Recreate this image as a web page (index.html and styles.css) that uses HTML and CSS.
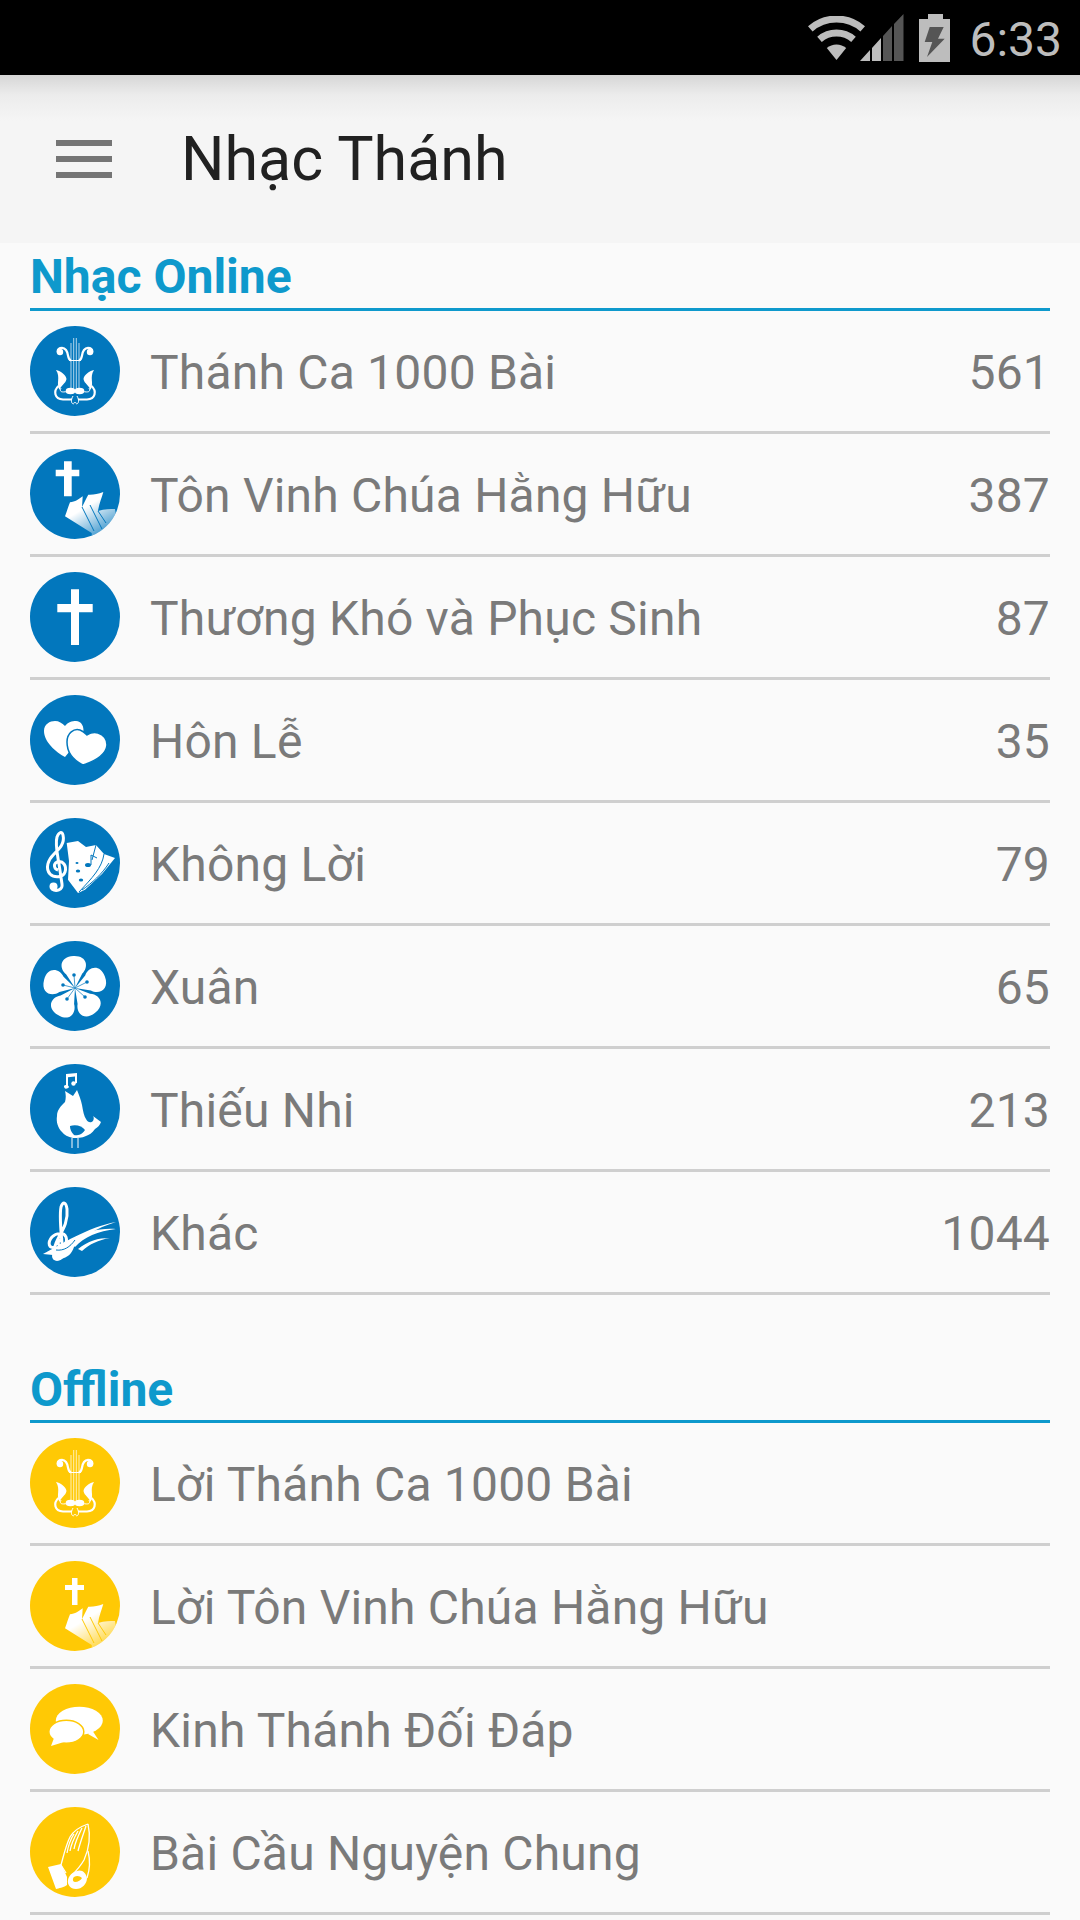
FILE: index.html
```html
<!DOCTYPE html>
<html lang="vi">
<head>
<meta charset="utf-8">
<title>Nhạc Thánh</title>
<link rel="stylesheet" href="styles.css">
</head>
<body>
<svg class="defs" width="0" height="0" aria-hidden="true">
  <defs>
    <linearGradient id="fade" x1="0.15" y1="0.1" x2="0.75" y2="0.95">
      <stop offset="0.3" stop-color="#fff"/>
      <stop offset="1" stop-color="#fff" stop-opacity="0.15"/>
    </linearGradient>
    <clipPath id="disc"><circle cx="45" cy="45" r="45"/></clipPath>
    <g id="lyre-half">
      <path class="ln" d="M28,27C26,22 33,20 36,24C39,28 37,33 41,34.500"/>
      <circle class="w" cx="30" cy="26" r="3.200"/>
      <path class="w" d="M26,44C31,45 36,49 36.500,53C35.500,58 31,59 29.500,64C25.500,57 31,52 26,44Z"/>
      <path class="ln" d="M28.500,60C23,65 24.500,73 33,73.500L42,73.500"/>
      <path class="ln thin" d="M31,62C29,66 32,66.500 37,65.500"/>
      <ellipse class="w" cx="40.500" cy="65" rx="4.800" ry="3.200"/>
      <path class="ln thin" d="M43,70C39,77 44,80 44.500,76"/>
    </g>
    <g id="lyre">
      <use href="#lyre-half"/>
      <use href="#lyre-half" transform="translate(90) scale(-1,1)"/>
      <path class="ln hair" d="M41,17V65M43.700,12V65M46.300,12V65M49,17V65"/>
      <path class="ln thin" d="M39,34.500H51"/>
    </g>
    <g id="horns" clip-path="url(#disc)">
      <path fill="url(#fade)" d="M35,67.300C37,62 38,58 40,53.300C45,53 49,50 52.700,47.300L52,58C55,52 57,48 58.300,45.700C63,46 68,45 73.300,43C72,48 69,55 68,62C75,60 80,60 85,60L90,90H62L61.700,84Z"/>
      <path class="gap" d="M52,58L64,82M60,56L72,80M68,62L76,74"/>
    </g>
    <g id="crossbig">
      <path class="w" d="M41,17.300H49V32H62.700V40.300H49V73H41V40.300H27.300V32H41Z"/>
    </g>
    <g id="hearts">
      <path class="w" d="M35,62C26,57 14,47 14,36C14,29 20,26 25,26C29,26 32,28 35,31C38,27 42,26 46,26C51,26 55,31 53,40Z"/>
      <path class="w gapw" d="M53,70C45,66 37,60 37,47C37,38 44,33 50,35C53,36 55,38 57,40C60,38 64,37 68,38C74,40 77,45 77,50C76,60 65,66 53,70Z"/>
    </g>
    <g id="clefsheets">
      <path class="w" d="M36.700,25L48,23L56,29L66,27L74,36L85,40L72,56L55,71.700L48,75L38,61.700L39,43Z"/>
      <path class="gap" d="M66,27L62,42M74,36C72,50 62,60 49,74M79,45C72,56 62,65 52,72"/>
      <path class="ln clefln" d="M28,52C24,51 23,46 27,44C33,42 37,48 35,54C33,60 24,60 20,56C15,50 18,42 24,36C29,31 35,26 33,17C32,13 29,14 27,19C25,26 27,34 29,46L32,66C33,72 26,74 22,71"/>
      <circle class="w" cx="23.500" cy="68.500" r="4"/>
      <ellipse class="dot" cx="48" cy="53" rx="2.200" ry="1.500"/>
      <ellipse class="dot" cx="51" cy="62" rx="2.200" ry="1.500"/>
      <ellipse class="dot" cx="47" cy="45" rx="1.500" ry="1.100"/>
      <ellipse class="dot" cx="58" cy="47" rx="3" ry="2"/>
      <path class="gap" d="M61,47V37L67,40"/>
    </g>
    <path id="petal" d="M45,47L37,33C30,27 31,15 45,15C59,15 60,27 53,33Z"/>
    <g id="flower">
      <use class="w" href="#petal" transform="rotate(-3 45 47)"/>
      <use class="w" href="#petal" transform="rotate(69 45 47)"/>
      <use class="w" href="#petal" transform="rotate(141 45 47)"/>
      <use class="w" href="#petal" transform="rotate(213 45 47)"/>
      <use class="w" href="#petal" transform="rotate(285 45 47)"/>
      <path class="gap hair" d="M45,47L44,34M45,47L57,41M45,47L55,56M45,47L37,58M45,47L33,44"/>
      <circle class="dot" cx="44" cy="34" r="1.800"/>
      <circle class="dot" cx="57" cy="41" r="1.800"/>
      <circle class="dot" cx="55" cy="56" r="1.800"/>
      <circle class="dot" cx="37" cy="58" r="1.800"/>
      <circle class="dot" cx="33" cy="44" r="1.800"/>
    </g>
    <g id="bird">
      <path class="w" d="M36,21V10L47,9V19L45,19.500V12.500L38,13.300V21.500A2.300,1.800 0 1 1 36,21Z"/>
      <circle class="w" cx="43.500" cy="19.500" r="2.200"/>
      <path class="w" d="M35,27L43,32L47,26C49,31 51,36 52,41C53,47 54,52 56,55C58,59 61,59 63,57C64,55 64,53 63,52L71,58C70,61 68,63 65,65C62,69 59,71 56,72C52,74 47,74 43,74C38,73 34,71 32,68C28,64 26,58 27,52C27,46 31,42 35,38C36,34 36,31 35,27Z"/>
      <path class="dot" d="M40,62C46,60 52,62 55,66C52,71 46,72 44,71C41,68 40,65 40,62Z"/>
      <path class="ln thin" d="M42,74V84M48,74V84"/>
    </g>
    <g id="clefswoosh">
      <path class="ln clefln" d="M33,53C29,52 27,56 29,58C33,61 38,56 36,50C34,45 26,46 22,50C17,56 19,62 25,60C26,50 39,40 37,22C36,15 33,14 31,20C29,30 31,45 33,66C33,71 29,73 26,71"/>
      <path class="w" d="M13,67C30,58 58,40 86,35C66,41 52,50 44,60C42,66 38,71 30,72C26,72 24,70 23,68Z"/>
      <path class="w" d="M40,54C56,44 70,41 86,42C68,44 54,50 45,60Z"/>
      <path class="w" d="M48,62C58,54 68,51 80,51C68,53 60,57 52,64Z"/>
      <circle class="w" cx="27" cy="69" r="5"/>
      <path class="gap" d="M26,63C34,64 40,60 45,53"/>
    </g>
    <g id="chat">
      <ellipse class="w" cx="49.300" cy="36.700" rx="23.500" ry="14"/>
      <path class="w" d="M62,46L68.500,56L58,50Z"/>
      <ellipse class="w gapw" cx="36.300" cy="47.700" rx="17.500" ry="11.500"/>
      <path class="w" d="M24,54L21,62L34,58Z"/>
    </g>
    <g id="hands">
      <path class="ln thin2" d="M58,17C52,19 44,23 40,30C36,38 34,47 31,58L36,66M58,17C61,30 58,44 54,53C50,60 46,64 42,68"/>
      <path class="ln thin2" d="M44,27C40,33 38,40 37,46M48,24C44,31 41,38 40,44M52,21C48,29 45,36 44,42M56,19C53,28 50,36 48,44"/>
      <path class="w" d="M18,60L31,57L37,70L37,78C33,81 29,81 26,82Z"/>
      <path class="w" d="M47,64C52,62 56,66 57,71C57,77 52,82 46,82C40,82 37,77 38,73C39,68 43,65 47,64ZM44,70C42,72 43,75 45,75C48,75 51,73 52,71C50,69 47,68 44,70Z"/>
      <path class="ln thin2" d="M58,44C60,52 60,62 57,71"/>
    </g>
  </defs>
</svg>

<div class="status">
  <svg class="wifi" width="57" height="44" viewBox="0 0 57 44">
    <path class="sb" d="M2.300,12.800A40,40 0 0 1 54.700,12.800M11.500,23.400A26,26 0 0 1 45.500,23.400"/>
    <path class="sf" d="M28.500,44L18.800,32A15,15 0 0 1 38.200,32Z"/>
  </svg>
  <svg class="signal" width="44" height="47" viewBox="0 0 44 47">
    <path class="sf" d="M0,47L10,36V47ZM12,34L21,24V47H12Z"/>
    <path class="sd" d="M23,22L32,12V47H23ZM34,10L43.500,0V47H34Z"/>
  </svg>
  <svg class="battery" width="32" height="48" viewBox="0 0 32 48">
    <path class="sf" d="M9,0H24V5H31V48H0V5H9Z"/>
    <path class="sd" d="M10.700,13H24.700L19,24.700H25.700L8,43L13.300,28H5.700Z"/>
  </svg>
  <span class="clock">6:33</span>
</div>

<header class="toolbar">
  <div class="menu"><i></i><i></i><i></i></div>
  <h1 class="title">Nhạc Thánh</h1>
</header>

<main class="content">
  <section class="group online">
    <h2 class="group-head">Nhạc Online</h2>
    <ul class="rows">
      <li class="row"><svg class="ico" viewBox="0 0 90 90"><circle class="disc" cx="45" cy="45" r="45"/><use href="#lyre"/></svg><span class="name">Thánh Ca 1000 Bài</span><span class="num">561</span></li>
      <li class="row"><svg class="ico" viewBox="0 0 90 90"><circle class="disc" cx="45" cy="45" r="45"/><path class="w" d="M34,12.300H41.700V20.700H49.300V27.300H41.700V47.300H34V27.300H25.700V20.700H34Z"/><use href="#horns"/></svg><span class="name">Tôn Vinh Chúa Hằng Hữu</span><span class="num">387</span></li>
      <li class="row"><svg class="ico" viewBox="0 0 90 90"><circle class="disc" cx="45" cy="45" r="45"/><use href="#crossbig"/></svg><span class="name">Thương Khó và Phục Sinh</span><span class="num">87</span></li>
      <li class="row"><svg class="ico" viewBox="0 0 90 90"><circle class="disc" cx="45" cy="45" r="45"/><use href="#hearts"/></svg><span class="name">Hôn Lễ</span><span class="num">35</span></li>
      <li class="row"><svg class="ico" viewBox="0 0 90 90"><circle class="disc" cx="45" cy="45" r="45"/><use href="#clefsheets"/></svg><span class="name">Không Lời</span><span class="num">79</span></li>
      <li class="row"><svg class="ico" viewBox="0 0 90 90"><circle class="disc" cx="45" cy="45" r="45"/><use href="#flower"/></svg><span class="name">Xuân</span><span class="num">65</span></li>
      <li class="row"><svg class="ico" viewBox="0 0 90 90"><circle class="disc" cx="45" cy="45" r="45"/><use href="#bird"/></svg><span class="name">Thiếu Nhi</span><span class="num">213</span></li>
      <li class="row"><svg class="ico" viewBox="0 0 90 90"><circle class="disc" cx="45" cy="45" r="45"/><use href="#clefswoosh"/></svg><span class="name">Khác</span><span class="num">1044</span></li>
    </ul>
  </section>
  <section class="group offline">
    <h2 class="group-head">Offline</h2>
    <ul class="rows">
      <li class="row"><svg class="ico" viewBox="0 0 90 90"><circle class="disc" cx="45" cy="45" r="45"/><use href="#lyre"/></svg><span class="name">Lời Thánh Ca 1000 Bài</span></li>
      <li class="row"><svg class="ico" viewBox="0 0 90 90"><circle class="disc" cx="45" cy="45" r="45"/><path class="w" d="M42,17H47.500V24H54V29H47.500V44H42V29H35V24H42Z"/><use href="#horns"/></svg><span class="name">Lời Tôn Vinh Chúa Hằng Hữu</span></li>
      <li class="row"><svg class="ico" viewBox="0 0 90 90"><circle class="disc" cx="45" cy="45" r="45"/><use href="#chat"/></svg><span class="name">Kinh Thánh Đối Đáp</span></li>
      <li class="row"><svg class="ico" viewBox="0 0 90 90"><circle class="disc" cx="45" cy="45" r="45"/><use href="#hands"/></svg><span class="name">Bài Cầu Nguyện Chung</span></li>
    </ul>
  </section>
</main>
</body>
</html>
```
FILE: styles.css
```css
* { box-sizing: border-box; }
html, body { margin: 0; padding: 0; }
body {
  width: 1080px;
  height: 1920px;
  overflow: hidden;
  background: #fafafa;
  font-family: Roboto, "Noto Sans", sans-serif;
}
.defs { display: block; height: 0; }

.status {
  height: 75px;
  background: #000;
  display: flex;
  align-items: center;
  justify-content: flex-end;
  padding-right: 18px;
}
.status svg { display: block; }
.sb { fill: none; stroke: #bdbdbd; stroke-width: 7; }
.sf { fill: #bdbdbd; }
.sd { fill: #555; }
.signal { margin-left: -5px; }
.battery { margin-left: 15px; }
.clock { margin-left: 18px; color: #bdbdbd; font-size: 48px; line-height: 75px; padding-top: 3px; }

.toolbar {
  height: 168px;
  background: linear-gradient(#d6d6d6 0, #ececec 20px, #f5f5f5 46px);
  display: flex;
  align-items: center;
  padding-left: 56px;
}
.menu { width: 56px; display: flex; flex-direction: column; gap: 10px; }
.menu i { display: block; height: 6px; background: #757575; }
.title { margin: 0 0 0 69px; font-size: 61px; font-weight: 400; color: #212121; line-height: 70px; }

.content { padding: 0 30px; }
.group-head {
  margin: 0;
  height: 68px;
  border-bottom: 3px solid #0e99cc;
  color: #0e99cc;
  font-size: 48px;
  font-weight: 700;
  line-height: 60px;
  padding-top: 4px;
}
.offline { margin-top: 60px; }
.offline .group-head { padding-top: 5px; }
.rows { list-style: none; margin: 0; padding: 0; }
.row {
  height: 123px;
  display: flex;
  align-items: center;
  border-bottom: 3px solid #cfcfcf;
  color: #7a7a7a;
  font-size: 48px;
  letter-spacing: 0.2px;
}
.ico { width: 90px; height: 90px; flex: none; display: block; }
.name { margin-left: 30px; flex: 1; padding-top: 3px; }
.num { padding-top: 3px; }

.online .ico { color: #0277bd; }
.offline .ico { color: #ffc905; }
.disc { fill: currentColor; }
.w { fill: #fff; }
.gapw { stroke: currentColor; stroke-width: 1.5; }
.ln { fill: none; stroke: #fff; stroke-width: 2.2; }
.ln.thin { stroke-width: 1; }
.ln.hair, .gap.hair { stroke-width: 0.7; }
.ln.thin2 { stroke-width: 1.3; }
.ln.clefln { stroke-width: 3; }
.gap { fill: none; stroke: currentColor; stroke-width: 1; }
.dot { fill: currentColor; }
```
